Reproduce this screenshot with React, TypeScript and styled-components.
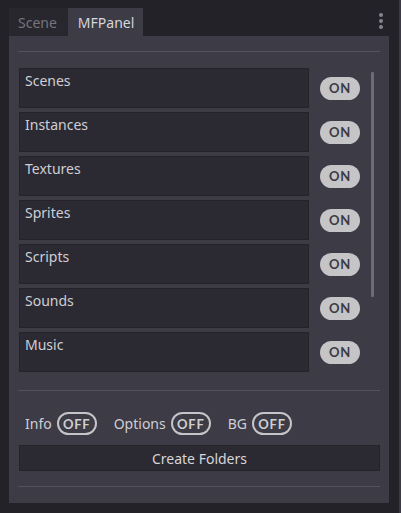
import styled, { createGlobalStyle } from "styled-components";

const GlobalStyle = createGlobalStyle`
  html, body {
    margin: 0;
    background: #232229;
  }
  body {
    font-family: "Noto Sans", "Open Sans", sans-serif;
    font-size: 14px;
    color: #cfced4;
  }
`;

const Screen = styled.div`
  display: flex;
  width: 401px;
  height: 513px;
  overflow: hidden;
`;

const Dock = styled.div`
  width: 390px;
  padding: 8px 0 0 9px;
  box-sizing: border-box;
  display: flex;
  flex-direction: column;
`;

const Splitter = styled.div`
  margin-left: auto;
  width: 2px;
  background: #3a3944;
`;

const TabBar = styled.div`
  display: flex;
  align-items: stretch;
  height: 28px;
  padding-right: 7px;
`;

const Tab = styled.div<{ $active?: boolean }>`
  display: flex;
  align-items: center;
  padding-left: ${(p) => (p.$active ? "10px" : "9px")};
  padding-right: ${(p) => (p.$active ? "9px" : "11px")};
  background: ${(p) => (p.$active ? "#3c3b46" : "#28272e")};
  color: ${(p) => (p.$active ? "#d6d5da" : "#75747c")};
  font-size: 14px;
`;

const MenuDots = styled.div`
  margin-left: auto;
  display: flex;
  flex-direction: column;
  gap: 2px;
  padding-top: 5px;
`;

const Dot = styled.span`
  width: 4px;
  height: 4px;
  border-radius: 50%;
  background: #85848c;
`;

const Panel = styled.div`
  width: 380px;
  height: 467px;
  box-sizing: border-box;
  background: #3c3b46;
  padding: 15px 9px 0 9px;
  display: flex;
  flex-direction: column;
`;

const Separator = styled.div<{ $gap?: number }>`
  height: 1px;
  background: #54535d;
  margin-top: ${(p) => p.$gap ?? 0}px;
`;

const ListArea = styled.div`
  display: flex;
  margin-top: 16px;
`;

const Rows = styled.div`
  display: flex;
  flex-direction: column;
  gap: 4px;
  padding-left: 1px;
`;

const Row = styled.div`
  display: flex;
  align-items: center;
`;

const NameBox = styled.div`
  width: 290px;
  height: 40px;
  box-sizing: border-box;
  background: #2b2a33;
  border: 1px solid #24232a;
  padding: 2px 5px;
  line-height: 19px;
`;

const Toggle = styled.div<{ $on?: boolean }>`
  width: 40px;
  height: 23px;
  box-sizing: border-box;
  border-radius: 12px;
  display: flex;
  align-items: center;
  justify-content: center;
  font-family: "Lato", "Open Sans", sans-serif;
  font-weight: 700;
  font-size: 13px;
  letter-spacing: 0.8px;
  background: ${(p) => (p.$on ? "#c5c5c7" : "transparent")};
  color: ${(p) => (p.$on ? "#3b3a43" : "#cfcfd1")};
  border: ${(p) => (p.$on ? "none" : "2px solid #c5c5c7")};
  margin-left: ${(p) => (p.$on ? "11px" : "0")};
`;

const ScrollTrack = styled.div`
  margin: 4px 0 0 11px;
  width: 3px;
  height: 225px;
  border-radius: 1px;
  background: #6c6b76;
`;

const OptionsRow = styled.div`
  display: flex;
  align-items: center;
  gap: 17px;
  margin-top: 21px;
  padding-left: 7px;
  height: 23px;
`;

const Option = styled.div`
  display: flex;
  align-items: center;
  gap: 5px;
`;

const ActionButton = styled.div`
  margin: 10px 0 0 1px;
  height: 26px;
  box-sizing: border-box;
  background: #2b2a33;
  border: 1px solid #24232a;
  display: flex;
  align-items: center;
  justify-content: center;
  color: #d6d5da;
`;

const folders = ["Scenes", "Instances", "Textures", "Sprites", "Scripts", "Sounds", "Music"];
const options = ["Info", "Options", "BG"];

export default function App() {
  return (
    <Screen>
      <GlobalStyle />
      <Dock>
        <TabBar>
          <Tab>Scene</Tab>
          <Tab $active>MFPanel</Tab>
          <MenuDots>
            <Dot />
            <Dot />
            <Dot />
          </MenuDots>
        </TabBar>
        <Panel>
          <Separator />
          <ListArea>
            <Rows>
              {folders.map((name) => (
                <Row key={name}>
                  <NameBox>{name}</NameBox>
                  <Toggle $on>ON</Toggle>
                </Row>
              ))}
            </Rows>
            <ScrollTrack />
          </ListArea>
          <Separator $gap={18} />
          <OptionsRow>
            {options.map((label) => (
              <Option key={label}>
                {label}
                <Toggle>OFF</Toggle>
              </Option>
            ))}
          </OptionsRow>
          <ActionButton>Create Folders</ActionButton>
          <Separator $gap={15} />
        </Panel>
      </Dock>
      <Splitter />
    </Screen>
  );
}
